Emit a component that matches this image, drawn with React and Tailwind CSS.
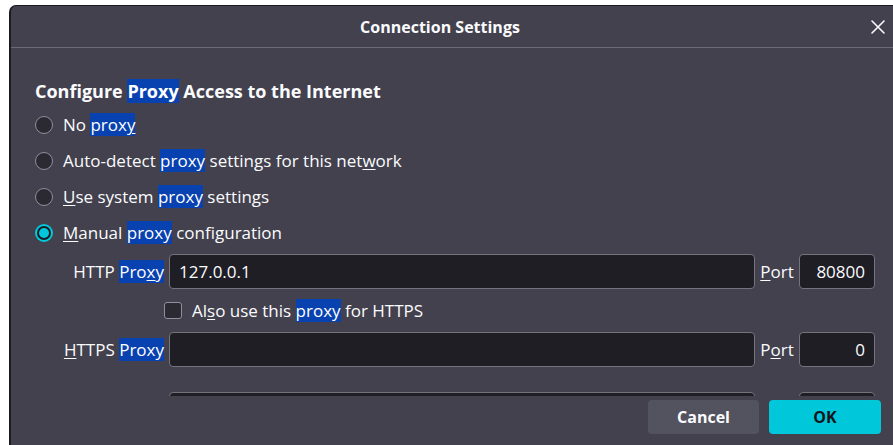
import React from "react";

const HL = ({ children }) => (
  <span className="bg-[#0841b0] text-white">{children}</span>
);

const U = ({ children }) => <span className="underline underline-offset-2">{children}</span>;

function Radio({ checked }) {
  if (checked) {
    return (
      <span className="flex h-[18px] w-[18px] shrink-0 items-center justify-center rounded-full bg-[#00c8da]">
        <span className="flex h-[14px] w-[14px] items-center justify-center rounded-full bg-[#1c1b22]">
          <span className="h-[10px] w-[10px] rounded-full bg-[#00c8da]" />
        </span>
      </span>
    );
  }
  return (
    <span className="h-[18px] w-[18px] shrink-0 rounded-full border border-[#8f8f9d] bg-[#2b2a33]" />
  );
}

function RadioRow({ checked, children }) {
  return (
    <div className="flex h-[36px] items-center gap-[10px]">
      <Radio checked={checked} />
      <span>{children}</span>
    </div>
  );
}

function Field({ className = "", value = "", right = false }) {
  return (
    <div
      className={`flex h-[35px] items-center rounded-[4px] border border-[#75747e] bg-[#1f1e25] px-[9px] ${
        right ? "justify-end" : ""
      } ${className}`}
    >
      {value}
    </div>
  );
}

function ProxyRow({ label, value, port, portLabel }) {
  return (
    <div className="flex items-center">
      <div className="w-[134px] shrink-0 whitespace-nowrap pr-[5px] text-right">{label}</div>
      <Field className="flex-1" value={value} />
      <div className="w-[44px] shrink-0 text-center">{portLabel}</div>
      <Field className="w-[76px] shrink-0" value={port} right />
    </div>
  );
}

export default function App() {
  return (
    <div
      className="h-[445px] w-[893px] overflow-hidden bg-white pl-[9px] pt-[5px]"
      style={{ fontFamily: '"Open Sans", "Noto Sans", sans-serif' }}
    >
      <div className="flex h-full flex-col overflow-hidden rounded-tl-[7px] border-l-2 border-t border-[#1c1b22] bg-[#42414d] text-[17px] text-[#fbfbfe]">
        {/* title bar */}
        <div className="relative flex h-[42px] shrink-0 items-center justify-center border-b border-[#6c6b75] pr-[24px]">
          <span className="text-[16px] font-bold">Connection Settings</span>
          <svg
            className="absolute right-[7px] top-[13px]"
            width="16"
            height="16"
            viewBox="0 0 16 16"
            fill="none"
            stroke="#fbfbfe"
            strokeWidth="1.6"
            strokeLinecap="round"
          >
            <path d="M2 2 L14 14 M14 2 L2 14" />
          </svg>
        </div>

        {/* scrollable body */}
        <div className="min-h-0 flex-1 overflow-hidden pl-[24px] pr-[18px] pt-[32px]">
          <div className="text-[18px] font-bold leading-[22px]">
            Configure <HL>Proxy</HL> Access to the Internet
          </div>
          <div className="mt-[5px]">
            <RadioRow>
              No <HL>prox<U>y</U></HL>
            </RadioRow>
            <RadioRow>
              Auto-detect <HL>proxy</HL> settings for this net<U>w</U>ork
            </RadioRow>
            <RadioRow>
              <U>U</U>se system <HL>proxy</HL> settings
            </RadioRow>
            <RadioRow checked>
              <U>M</U>anual <HL>proxy</HL> configuration
            </RadioRow>
          </div>

          <div className="mt-[3px]">
            <ProxyRow
              label={
                <>
                  HTTP <HL>Pro<U>x</U>y</HL>
                </>
              }
              value="127.0.0.1"
              portLabel={
                <>
                  <U>P</U>ort
                </>
              }
              port="80800"
            />
            <div className="flex h-[43px] items-center gap-[10px] pl-[129px]">
              <span className="h-[17px] w-[18px] shrink-0 rounded-[3px] border border-[#8f8f9d] bg-[#2b2a33]" />
              <span>
                Al<U>s</U>o use this <HL>proxy</HL> for HTTPS
              </span>
            </div>
            <ProxyRow
              label={
                <>
                  <U>H</U>TTPS <HL>Proxy</HL>
                </>
              }
              value=""
              portLabel={
                <>
                  P<U>o</U>rt
                </>
              }
              port="0"
            />
            <div className="mt-[25px] flex items-center">
              <div className="w-[134px] shrink-0" />
              <Field className="flex-1" />
              <div className="w-[44px] shrink-0" />
              <Field className="w-[76px] shrink-0" />
            </div>
          </div>
        </div>

        {/* footer buttons */}
        <div className="flex h-[49px] shrink-0 items-start justify-end gap-[10px] pr-[12px] pt-[4px]">
          <button className="h-[34px] w-[111px] rounded-[4px] bg-[#53525f] text-[16px] font-bold text-[#fbfbfe]">
            Cancel
          </button>
          <button className="h-[34px] w-[112px] rounded-[4px] bg-[#00c8da] text-[16px] font-bold text-[#15141a]">
            OK
          </button>
        </div>
      </div>
    </div>
  );
}
